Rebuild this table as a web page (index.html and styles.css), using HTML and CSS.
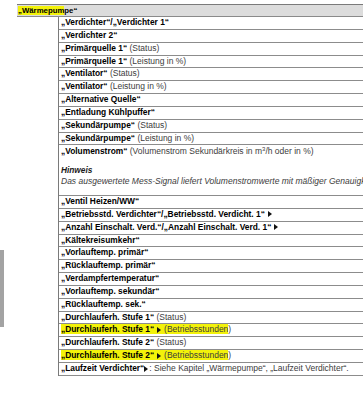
FILE: index.html
```html
<!DOCTYPE html>
<html lang="de">
<head>
<meta charset="utf-8">
<link rel="stylesheet" href="styles.css">
</head>
<body>
<div class="page">
  <div class="sidemark"></div>
  <div class="head"><b><span class="hl">„Wärmepum</span>pe“</b></div>
  <div class="table">
    <div class="row"><b>„Verdichter“/„Verdichter 1“</b></div>
    <div class="row"><b>„Verdichter 2“</b></div>
    <div class="row"><b>„Primärquelle 1“</b> <span class="n">(Status)</span></div>
    <div class="row"><b>„Primärquelle 1“</b> <span class="n">(Leistung in %)</span></div>
    <div class="row"><b>„Ventilator“</b> <span class="n">(Status)</span></div>
    <div class="row"><b>„Ventilator“</b> <span class="n">(Leistung in %)</span></div>
    <div class="row"><b>„Alternative Quelle“</b></div>
    <div class="row"><b>„Entladung Kühlpuffer“</b></div>
    <div class="row"><b>„Sekundärpumpe“</b> <span class="n">(Status)</span></div>
    <div class="row"><b>„Sekundärpumpe“</b> <span class="n">(Leistung in %)</span></div>
    <div class="row block">
      <div class="line"><b>„Volumenstrom“</b> <span class="n">(Volumenstrom Sekundärkreis in m<sup>3</sup>/h oder in %)</span></div>
      <div class="note-title">Hinweis</div>
      <div class="note">Das ausgewertete Mess-Signal liefert Volumenstromwerte mit mäßiger Genauigkeit.</div>
    </div>
    <div class="row"><b>„Ventil Heizen/WW“</b></div>
    <div class="row"><b>„Betriebsstd. Verdichter“/„Betriebsstd. Verdicht. 1“</b><i class="tri"></i></div>
    <div class="row"><b>„Anzahl Einschalt. Verd.“/„Anzahl Einschalt. Verd. 1“</b><i class="tri"></i></div>
    <div class="row"><b>„Kältekreisumkehr“</b></div>
    <div class="row"><b>„Vorlauftemp. primär“</b></div>
    <div class="row"><b>„Rücklauftemp. primär“</b></div>
    <div class="row"><b>„Verdampfertemperatur“</b></div>
    <div class="row"><b>„Vorlauftemp. sekundär“</b></div>
    <div class="row"><b>„Rücklauftemp. sek.“</b></div>
    <div class="row"><b>„Durchlauferh. Stufe 1“</b> <span class="n">(Status)</span></div>
    <div class="row"><span class="hl"><b>„Durchlauferh. Stufe 1“</b><i class="tri"></i><span class="n">(Betriebsstunden</span></span><span class="n">)</span></div>
    <div class="row"><b>„Durchlauferh. Stufe 2“</b> <span class="n">(Status)</span></div>
    <div class="row"><span class="hl"><b>„Durchlauferh. Stufe 2“</b><i class="tri"></i><span class="n">(Betriebsstunden</span></span><span class="n">)</span></div>
    <div class="row"><b>„Laufzeit Verdichter“</b><i class="tri tight"></i><span class="n">: Siehe Kapitel „Wärmepumpe“, „Laufzeit Verdichter“.</span></div>
  </div>
</div>
</body>
</html>
```
FILE: styles.css
```css
html, body {
  margin: 0;
  padding: 0;
  background: #ffffff;
  overflow: hidden;
}
body {
  width: 363px;
  height: 400px;
  font-family: "Liberation Sans", Arial, sans-serif;
  font-size: 8.5px;
  color: #111;
}
.page {
  position: relative;
  width: 520px;
  padding-top: 4px;
}
.sidemark {
  position: absolute;
  left: 0;
  top: 250px;
  width: 4px;
  height: 77px;
  background: #a3a3a3;
}
.head {
  margin-left: 17px;
  height: 13px;
  box-sizing: border-box;
  border-top: 1px solid #7a7a7a;
  border-bottom: 1px solid #8a8a8a;
  background: #dcdcdc;
  padding-left: 1px;
  line-height: 11px;
}
.head b { font-size: 7.8px; }
b { font-weight: bold; color: #000; font-size: 8.4px; }
.n { color: #3c3c3c; font-weight: normal; }
.hl { background: #f3f20a; }
.table {
  margin-left: 58px;
  border-left: 1px solid #7a7a7a;
}
.row {
  box-sizing: border-box;
  height: 12.85px;
  line-height: 11.85px;
  border-bottom: 1px solid #8c8c8c;
  padding-left: 2px;
  white-space: nowrap;
}
.row.block {
  height: 50.6px;
  line-height: 11px;
  padding-top: 1px;
}
.line sup { font-size: 6px; line-height: 0; vertical-align: 3px; }
.note-title {
  margin-top: 8px;
  font-style: italic;
  font-weight: bold;
  font-size: 8.3px;
  color: #1a1a1a;
}
.note {
  font-style: italic;
  color: #3c3c3c;
}
.tri {
  display: inline-block;
  width: 0;
  height: 0;
  border-top: 3px solid transparent;
  border-bottom: 3px solid transparent;
  border-left: 4px solid #111;
  margin: 0 3px 0 3px;
  vertical-align: -0.5px;
}
.tri.tight { margin: 0 1px 0 0; }
```
